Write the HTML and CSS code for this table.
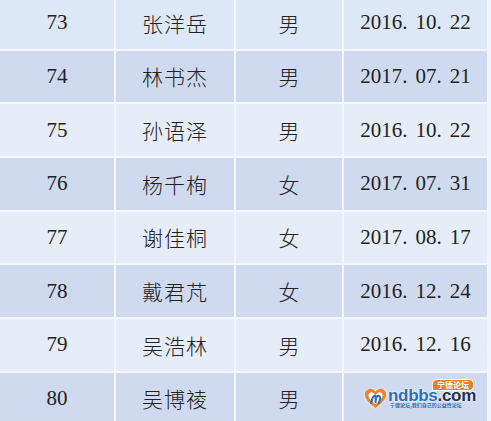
FILE: index.html
```html
<!DOCTYPE html>
<html lang="zh-CN">
<head>
<meta charset="utf-8">
<title>名单</title>
<link rel="stylesheet" href="styles.css">
</head>
<body>
<div class="page">
<table class="roster">
<colgroup><col class="c1"><col class="c2"><col class="c3"><col class="c4"></colgroup>
<tbody>
<tr class="r-first"><td>73</td><td>张洋岳</td><td>男</td><td>2016<span class="d">.</span>10<span class="d">.</span>22</td></tr>
<tr class="r-even"><td>74</td><td>林书杰</td><td>男</td><td>2017<span class="d">.</span>07<span class="d">.</span>21</td></tr>
<tr class="r-odd"><td>75</td><td>孙语泽</td><td>男</td><td>2016<span class="d">.</span>10<span class="d">.</span>22</td></tr>
<tr class="r-even"><td>76</td><td>杨千栒</td><td>女</td><td>2017<span class="d">.</span>07<span class="d">.</span>31</td></tr>
<tr class="r-odd"><td>77</td><td>谢佳桐</td><td>女</td><td>2017<span class="d">.</span>08<span class="d">.</span>17</td></tr>
<tr class="r-even"><td>78</td><td>戴君芃</td><td>女</td><td>2016<span class="d">.</span>12<span class="d">.</span>24</td></tr>
<tr class="r-odd"><td>79</td><td>吴浩林</td><td>男</td><td>2016<span class="d">.</span>12<span class="d">.</span>16</td></tr>
<tr class="r-even"><td>80</td><td>吴博祾</td><td>男</td><td class="wm-cell">2016<span class="d">.</span>12<span class="d">.</span>18</td></tr>
</tbody>
</table>
<div class="watermark">
  <svg class="wm-heart" width="23" height="23" viewBox="0 0 26 26">
    <path d="M13 24 C6 18 1 14 1 8.5 C1 4.5 4 2 7.5 2 C10 2 12 3.5 13 5.5 C14 3.5 16 2 18.5 2 C22 2 25 4.5 25 8.5 C25 14 20 18 13 24 Z" fill="#f08327"/>
    <path d="M13 19.5 C8 15.5 5 12.5 5 9 C5 7 6.5 5.8 8.2 5.8 C10 5.8 11.5 7 13 9.5 C14.5 7 16 5.8 17.8 5.8 C19.5 5.8 21 7 21 9 C21 12.5 18 15.5 13 19.5 Z" fill="#ffffff"/>
    <path d="M8 18 C9 14 10 10 12 10 C14 10 13.5 14 13 17 M13 13 C14 10.5 16 9.5 17.5 10.5 C19 11.5 18 15 17 18" fill="none" stroke="#2b6cc4" stroke-width="2.4" stroke-linecap="round"/>
  </svg>
  <div class="wm-text">
    <span class="wm-badge">宁德论坛</span>
    <div class="wm-name"><span class="wm-nd">ndbbs</span><span class="wm-com">.com</span></div>
    <div class="wm-slogan">宁德论坛,我们自己的公益性论坛</div>
  </div>
</div>
</div>
</body>
</html>
```
FILE: styles.css
```css
html, body {
  margin: 0;
  padding: 0;
  background: #eef2fa;
  overflow: hidden;
}
.page {
  position: relative;
  width: 491px;
  height: 421px;
  overflow: hidden;
}
.roster {
  margin-top: -3px;
  width: 489px;
  table-layout: fixed;
  border-collapse: separate;
  border-spacing: 0;
  font-family: "Liberation Serif", "Noto Sans CJK SC", serif;
  font-size: 21px;
  color: #222;
}
.c1 { width: 116px; }
.c2 { width: 120px; }
.c3 { width: 108px; }
.c4 { width: 145px; }
.roster tr { height: 53.67px; }
.roster td {
  box-sizing: border-box;
  height: 53.67px;
  padding: 0;
  text-align: center;
  vertical-align: middle;
  border-right: 2px solid #f4f7fd;
  border-bottom: 2px solid #f4f7fd;
  white-space: nowrap;
}
.roster td:nth-child(2),
.roster td:nth-child(3) {
  font-family: "Noto Sans CJK SC", sans-serif;
  font-size: 21px;
  font-weight: 300;
}
.roster td:nth-child(2) { letter-spacing: 1px; }
.d { padding-right: 8px; }
.r-first td { background: #dce7f7; }
.r-odd td { background: #e6ecf8; }
.r-even td { background: #cfdaf1; }

.watermark {
  position: absolute;
  left: 360px;
  top: 380px;
  width: 122px;
  height: 32px;
  padding-left: 4px;
  box-sizing: border-box;
  display: flex;
  align-items: flex-start;
  gap: 1px;
  background: #cfdaf1;
}
.wm-heart {
  flex: none;
  margin-top: 7px;
  filter: drop-shadow(0 0 1px #fff);
}
.wm-text {
  display: flex;
  flex-direction: column;
  align-items: flex-start;
}
.wm-badge {
  align-self: flex-end;
  margin-right: 3px;
  background: #ef7d23;
  color: #fff;
  font-family: "Noto Sans CJK SC", sans-serif;
  font-size: 8px;
  font-weight: 700;
  line-height: 10px;
  height: 10px;
  padding: 0 4px;
  border-radius: 4px 4px 4px 0;
  box-shadow: 0 0 0 1px #fff;
}
.wm-name {
  font-family: "Liberation Sans", sans-serif;
  font-weight: 700;
  font-size: 17px;
  line-height: 12px;
  height: 12px;
  letter-spacing: -0.3px;
  white-space: nowrap;
  text-shadow: 0 0 2px #fff, 0 0 2px #fff;
}
.wm-nd { color: #2a6bc6; }
.wm-com { color: #1e2f56; }
.wm-slogan {
  font-family: "Noto Sans CJK SC", sans-serif;
  font-size: 5px;
  line-height: 6px;
  height: 6px;
  color: #1f5fae;
  font-weight: 700;
  white-space: nowrap;
  margin-left: 2px;
  text-shadow: 0 0 1px #fff;
}
```
